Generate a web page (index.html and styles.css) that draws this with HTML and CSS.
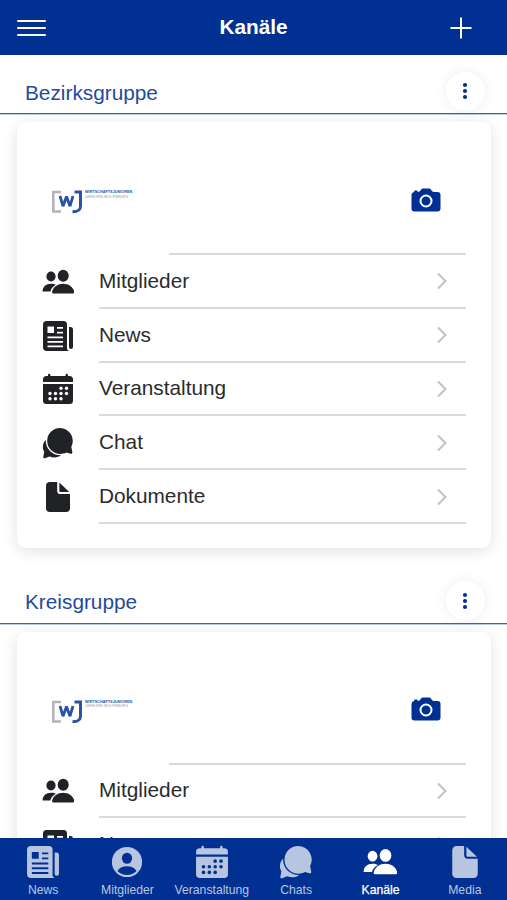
FILE: index.html
```html
<!DOCTYPE html>
<html lang="de">
<head>
<meta charset="utf-8">
<meta name="viewport" content="width=device-width">
<title>Kanäle</title>
<link rel="stylesheet" href="styles.css">
</head>
<body>
<svg class="defs" aria-hidden="true">
  <symbol id="people" viewBox="0 0 32 32">
    <ellipse cx="9" cy="10.5" rx="4.6" ry="5"/>
    <path d="M0.6 25.5C0.6 20.5 4 17.7 9 17.7c2 0 3.600.4 5 1.100C10.800 20.500 8.900 23 8.400 25.500Z"/>
    <ellipse cx="21.200" cy="9.800" rx="5.500" ry="6"/>
    <path d="M11.200 27.500C10 27.500 9.900 26.500 10.200 25.500C11.300 20.800 15.800 17.700 21.200 17.700s9.900 3.100 11 7.800c.3 1.100-.1 2-1.200 2Z"/>
  </symbol>
  <symbol id="news" viewBox="0 0 32 32">
    <path d="M4.500 1h17A3.500 3.500 0 0 1 25 4.500V28c0 1.500.8 2.700 2 3H4.800A3.800 3.800 0 0 1 1 27.200V4.500A3.500 3.500 0 0 1 4.500 1Z"/>
    <path d="M27 7h1.500A2.500 2.500 0 0 1 31 9.500V27a2 2 0 0 1-4 0Z"/>
    <path class="cut" d="M5.500 6.500h6.500v6.500h-6.500ZM15 7h6v1.800h-6ZM15 11.700h6v1.800h-6ZM5.500 16.500h15.500v1.800H5.500ZM5.500 21h15.500v1.800H5.500ZM5.500 25.500h15.500v1.800H5.500Z"/>
  </symbol>
  <symbol id="calendar" viewBox="0 0 32 32">
    <path d="M1 9V6.500A3.500 3.500 0 0 1 4.500 3H6V2a1.200 1.200 0 0 1 2.400 0v1h15.200V2A1.200 1.200 0 0 1 26 2v1h1.500A3.500 3.500 0 0 1 31 6.500V9ZM1 11h30v16.500a3.500 3.500 0 0 1-3.500 3.500h-23A3.500 3.500 0 0 1 1 27.500Z"/>
    <g class="cut"><circle cx="19" cy="15.200" r="1.700"/><circle cx="24.500" cy="15.200" r="1.700"/><circle cx="8" cy="20.500" r="1.700"/><circle cx="13.500" cy="20.500" r="1.700"/><circle cx="19" cy="20.500" r="1.700"/><circle cx="24.500" cy="20.500" r="1.700"/><circle cx="8" cy="25.800" r="1.700"/><circle cx="13.500" cy="25.800" r="1.700"/><circle cx="19" cy="25.800" r="1.700"/></g>
  </symbol>
  <symbol id="chat" viewBox="0 0 32 32">
    <path d="M3.800 13C.6 16 0 21 2.200 24.800L1.300 30c0 1.200.6 1.600 1.700 1.200L7.500 29.500c4.500 1.600 8.500 1.200 11.500-1.200C10.500 28.500 3.500 22 3.800 13Z"/>
    <path d="M18 1a12.800 12.800 0 0 1 11.300 18.800l1 5.200c.2 1.300-.5 2-1.700 1.700L24.500 25.500C15.500 30 5.200 23.500 5.200 14A12.800 12.800 0 0 1 18 1Z"/>
  </symbol>
  <symbol id="file" viewBox="0 0 32 32">
    <path d="M8 1h7.200v8.500A3.300 3.300 0 0 0 18.500 13H28v14a4 4 0 0 1-4 4H8a4 4 0 0 1-4-4V5A4 4 0 0 1 8 1Z"/>
    <path d="M17.300 1.600 27.300 11h-9a1 1 0 0 1-1-1Z"/>
  </symbol>
  <symbol id="person" viewBox="0 0 32 32">
    <circle cx="16" cy="16" r="14.200"/>
    <ellipse class="cut" cx="16" cy="12.500" rx="4.800" ry="5.200"/>
    <path class="cut" d="M7 24.500c2-3.200 5.200-4.500 9-4.500s7 1.300 9 4.500a12.500 12.500 0 0 1-18 0Z"/>
  </symbol>
  <symbol id="camera" viewBox="0 0 30 24">
    <path d="M3 4 3.500 2.600H6L7 4c1.300 0 1.800-.6 2.500-1.700C10.500.8 11 .5 12.500.5h5c1.500 0 2 .3 3 1.800.7 1.100 1.200 1.700 2.500 1.700h3.500A3 3 0 0 1 29.500 7v13.500a3 3 0 0 1-3 3h-23a3 3 0 0 1-3-3V7A3 3 0 0 1 3 4Z"/>
    <circle class="ring" cx="15" cy="13" r="5.500"/>
  </symbol>
  <symbol id="chevron" viewBox="0 0 12 18"><path class="line" d="m2 1.500 7.500 7.500L2 16.500"/></symbol>
  <symbol id="dots" viewBox="0 0 6 18"><circle cx="3" cy="3" r="2.100"/><circle cx="3" cy="9" r="2.100"/><circle cx="3" cy="15" r="2.100"/></symbol>
  <symbol id="wj" viewBox="0 0 32 25">
    <path class="bracket" d="M10 3H2.300v19.500H10"/>
    <path class="w" d="m9 7 3 10.200 3.500-9.700 3.500 9.700 3-10.200"/>
    <path class="j" d="M23.500 3h6v14c0 4.200-2.200 5.800-8 5.800"/>
  </symbol>
</svg>

<header class="topbar">
  <button class="menu" aria-label="Menü"><span></span><span></span><span></span></button>
  <h1>Kanäle</h1>
  <button class="add" aria-label="Neu"><svg viewBox="0 0 22 22"><path d="M11 .5v21M.5 11h21"/></svg></button>
</header>

<main class="content">
  <section class="group">
    <div class="group-head"><h2>Bezirksgruppe</h2><button class="more" aria-label="Mehr"><svg><use href="#dots"/></svg></button></div>
    <div class="card">
      <div class="brand">
        <svg class="mark"><use href="#wj"/></svg>
        <div class="brand-text"><b>WIRTSCHAFTSJUNIOREN</b><span>GIFHORN-WOLFSBURG</span></div>
        <svg class="camera"><use href="#camera"/></svg>
      </div>
      <ul>
        <li><svg class="icon"><use href="#people"/></svg><a>Mitglieder<svg class="chevron"><use href="#chevron"/></svg></a></li>
        <li><svg class="icon"><use href="#news"/></svg><a>News<svg class="chevron"><use href="#chevron"/></svg></a></li>
        <li><svg class="icon"><use href="#calendar"/></svg><a>Veranstaltung<svg class="chevron"><use href="#chevron"/></svg></a></li>
        <li><svg class="icon"><use href="#chat"/></svg><a>Chat<svg class="chevron"><use href="#chevron"/></svg></a></li>
        <li><svg class="icon"><use href="#file"/></svg><a>Dokumente<svg class="chevron"><use href="#chevron"/></svg></a></li>
      </ul>
    </div>
  </section>
  <section class="group">
    <div class="group-head"><h2>Kreisgruppe</h2><button class="more" aria-label="Mehr"><svg><use href="#dots"/></svg></button></div>
    <div class="card">
      <div class="brand">
        <svg class="mark"><use href="#wj"/></svg>
        <div class="brand-text"><b>WIRTSCHAFTSJUNIOREN</b><span>GIFHORN-WOLFSBURG</span></div>
        <svg class="camera"><use href="#camera"/></svg>
      </div>
      <ul>
        <li><svg class="icon"><use href="#people"/></svg><a>Mitglieder<svg class="chevron"><use href="#chevron"/></svg></a></li>
        <li><svg class="icon"><use href="#news"/></svg><a>News<svg class="chevron"><use href="#chevron"/></svg></a></li>
      </ul>
    </div>
  </section>
</main>

<nav class="tabs">
  <a><svg><use href="#news"/></svg>News</a>
  <a><svg><use href="#person"/></svg>Mitglieder</a>
  <a><svg><use href="#calendar"/></svg>Veranstaltung</a>
  <a><svg><use href="#chat"/></svg>Chats</a>
  <a class="active"><svg><use href="#people"/></svg>Kanäle</a>
  <a><svg><use href="#file"/></svg>Media</a>
</nav>
</body>
</html>
```
FILE: styles.css
```css
* { box-sizing: border-box; }
:root { --blue: #003192; --cut: #fff; }
body {
  margin: 0;
  height: 100vh;
  display: flex;
  flex-direction: column;
  overflow: hidden;
  background: #fff;
  color: #2b2b2d;
  font: 20.8px/24px "Liberation Sans", Arial, sans-serif;
}
h1, h2, ul { margin: 0; padding: 0; }
button { border: 0; padding: 0; background: none; }
svg { display: block; fill: currentColor; }
.defs { position: absolute; width: 0; height: 0; }
.cut { fill: var(--cut); }
.ring { fill: none; stroke: #fff; stroke-width: 2; }
.line { fill: none; stroke: currentColor; stroke-width: 2.1; }

.topbar {
  flex: none;
  height: 54.5px;
  display: grid;
  grid-template-columns: 64px 1fr 64px;
  align-items: center;
  background: var(--blue);
  color: #fff;
}
.topbar h1 { font-size: 20.8px; text-align: center; }
.menu { display: grid; gap: 5px; width: 29px; margin: 2px 0 0 17px; }
.menu span { height: 2px; border-radius: 1px; background: #fff; }
.add { margin-left: 6.5px; }
.add svg { width: 22px; height: 22px; margin-top: 1px; stroke: #fff; stroke-width: 2; }

.content { flex: 1; min-height: 0; overflow: hidden; }
.group { height: 509.5px; }
.group-head {
  display: flex;
  justify-content: space-between;
  height: 59.5px;
  padding: 17px 22.5px 0 25px;
  border-bottom: 1px solid #3d65a8;
  box-shadow: 0 1px #bccce6;
  color: #1f4a9d;
}
.group-head h2 { margin-top: 9px; font-size: 20.8px; font-weight: 400; }
.more {
  display: grid;
  place-items: center;
  width: 39px;
  height: 39px;
  border-radius: 50%;
  background: #fff;
  box-shadow: 0 0 14px rgba(0, 0, 0, .08);
  color: var(--blue);
}
.more svg { width: 6px; height: 18px; }
.card {
  height: 426px;
  margin: 8px 16px 0 17px;
  padding: 0 25px;
  border-radius: 9px;
  background: #fff;
  box-shadow: 0 3px 15px rgba(0, 0, 0, .12);
}
.brand {
  position: relative;
  display: flex;
  align-items: flex-start;
  height: 133px;
  padding: 67px 25px 0 9px;
}
.brand::after {
  content: "";
  position: absolute;
  left: 127px;
  right: 0;
  bottom: 0;
  height: 2px;
  background: #dadadb;
}
.mark { width: 32px; height: 25px; fill: none; stroke: #2854a8; stroke-width: 3; }
.bracket { stroke: #b1b4b8; stroke-width: 2.6; }
.w { stroke-width: 2.8; stroke-linejoin: bevel; }
.brand-text { display: grid; margin: 1px auto 0 2px; font-size: 3.8px; line-height: 4.5px; white-space: nowrap; }
.brand-text b { color: #2854a8; }
.brand-text span { color: #969ba3; }
.camera { width: 30px; height: 24px; margin-top: -1.5px; color: var(--blue); }
ul { list-style: none; }
li { display: flex; align-items: center; height: 53.8px; }
.icon { width: 32px; height: 32px; color: #202225; margin-right: 25px; }
li a {
  flex: 1;
  display: flex;
  align-items: center;
  justify-content: space-between;
  height: 100%;
  padding-right: 18px;
  border-bottom: 2px solid #dadadb;
}
.chevron { width: 12px; height: 18px; margin-top: 1px; color: #c3c3c5; }

.tabs {
  flex: none;
  display: grid;
  grid-template-columns: repeat(6, 1fr);
  height: 62px;
  padding: 7px 0 0 1px;
  background: var(--blue);
  color: #b8c5e0;
  font-size: 12.2px;
  line-height: 14px;
  --cut: var(--blue);
}
.tabs a { display: flex; flex-direction: column; align-items: center; gap: 4px; }
.tabs svg { width: 34px; height: 34px; }
.tabs .active { color: #fff; -webkit-text-stroke: .25px #fff; }
```
